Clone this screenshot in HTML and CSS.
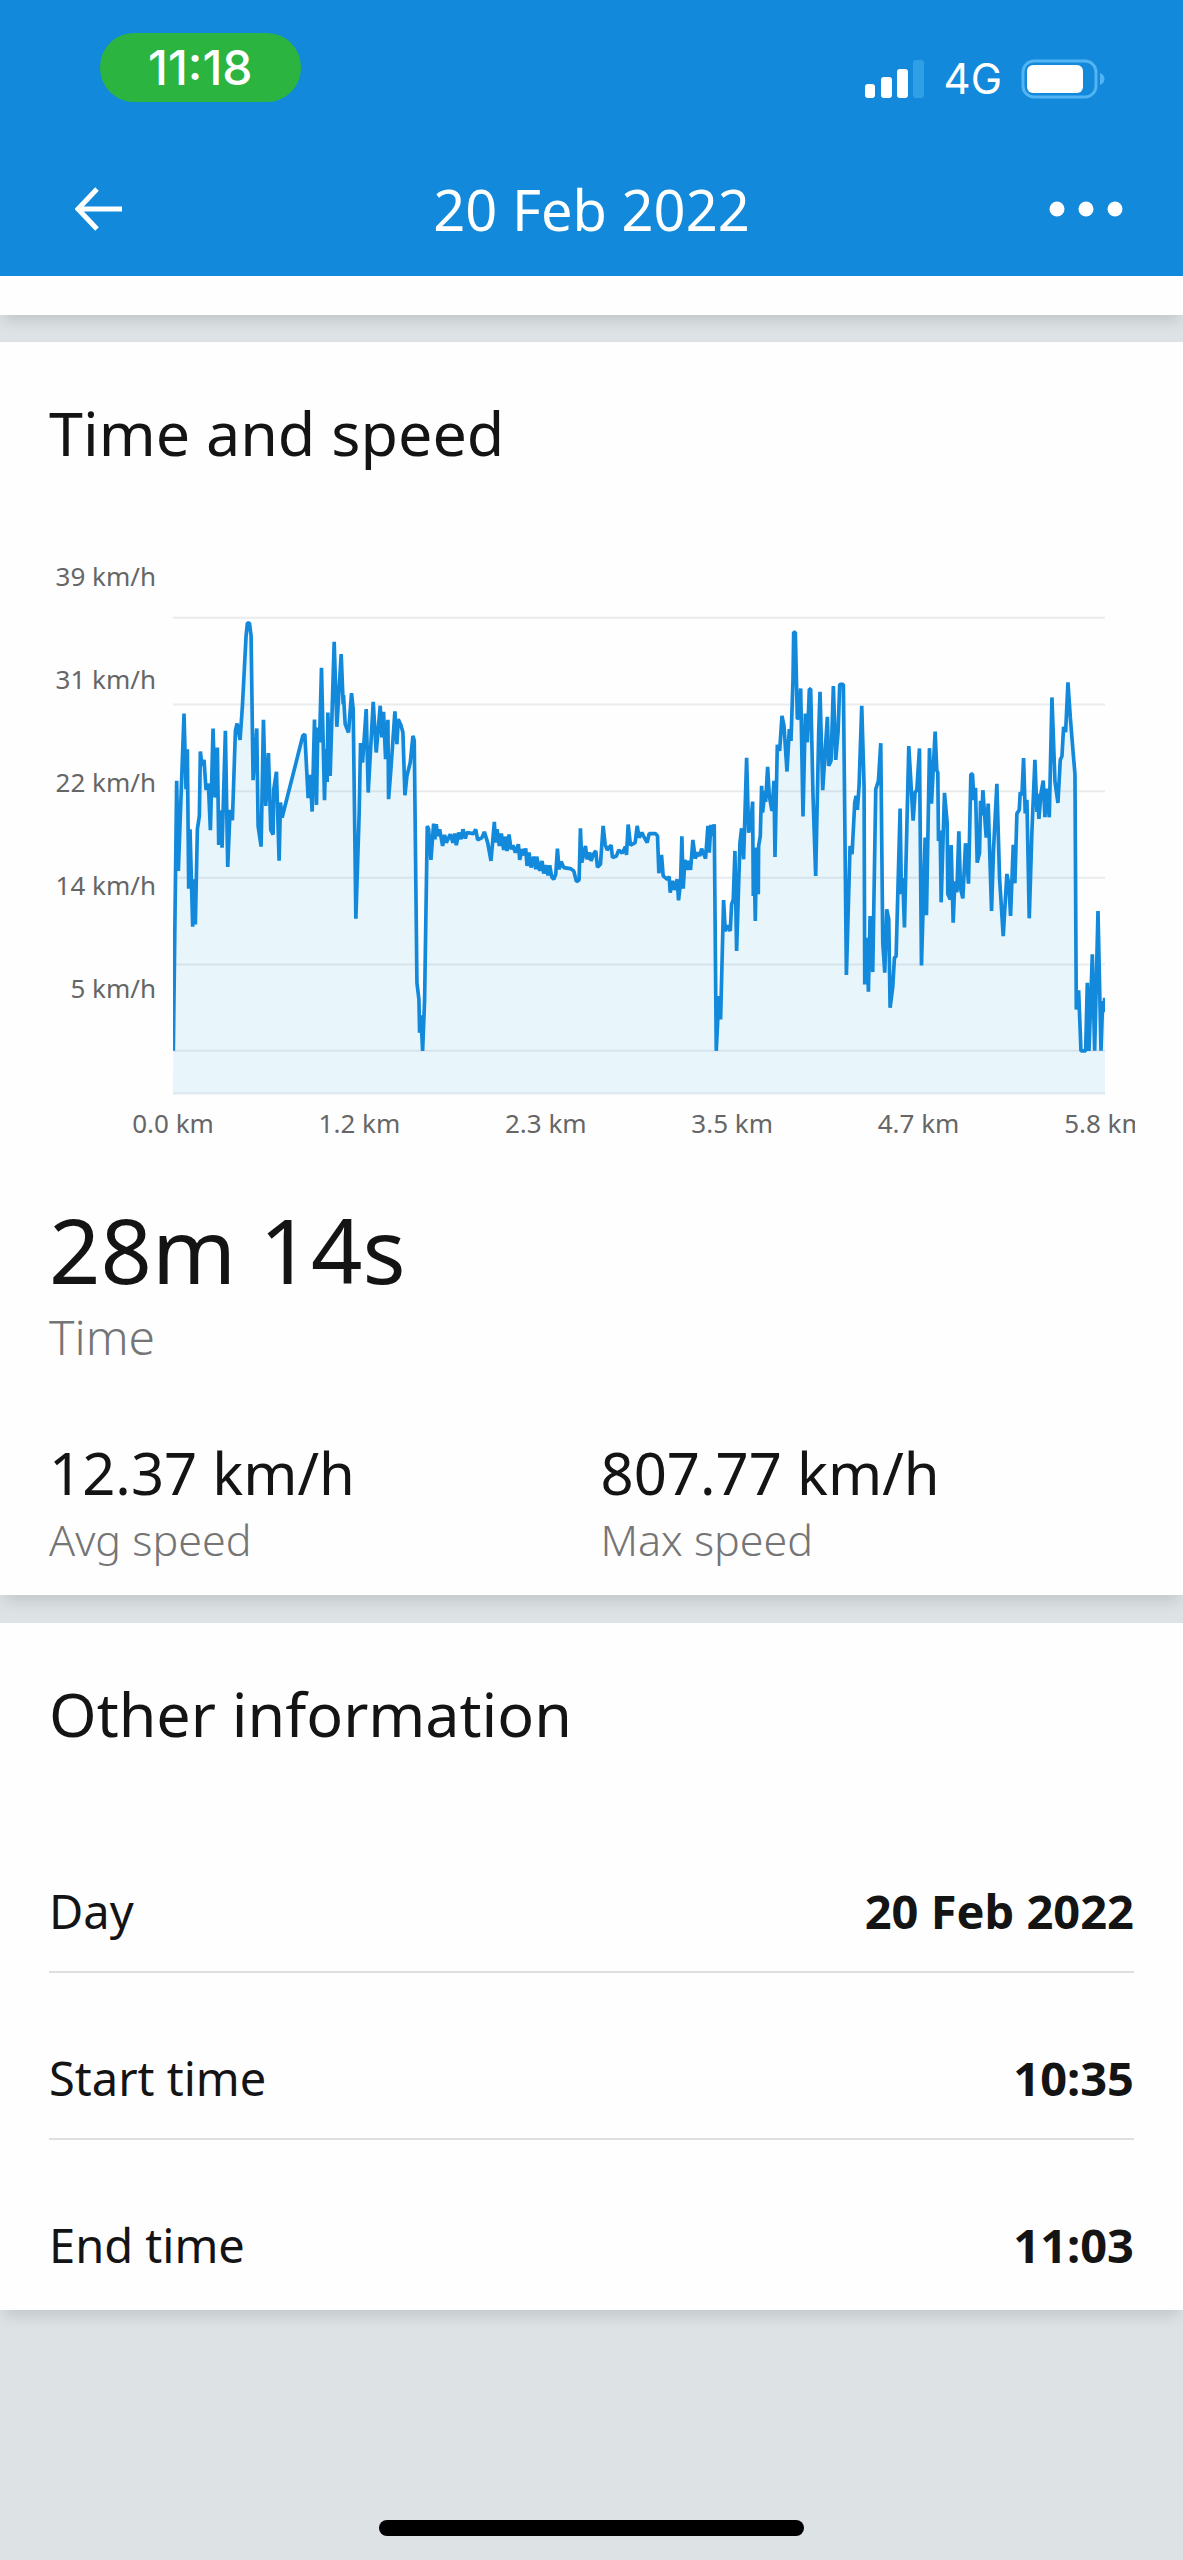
FILE: index.html
```html
<!DOCTYPE html>
<html lang="en">
<head>
  <meta charset="utf-8">
  <meta name="viewport" content="width=device-width, initial-scale=1">
  <title>20 Feb 2022</title>
  <link rel="stylesheet" href="styles.css">
</head>
<body>
  <header class="header">
    <div class="status-bar">
      <span class="clock">11:18</span>
      <div class="status-icons">
        <svg class="signal" width="60" height="39" viewBox="0 0 60 39" aria-hidden="true">
          <rect x="0" y="24" width="10" height="14" rx="3"/>
          <rect x="16" y="17" width="11" height="21" rx="3"/>
          <rect x="32" y="9" width="11" height="29" rx="3"/>
          <rect class="off" x="48" y="0" width="11" height="38" rx="3"/>
        </svg>
        <span class="network">4G</span>
        <svg class="battery" width="84" height="40" viewBox="0 0 84 40" aria-hidden="true">
          <rect class="battery-case" x="2" y="2" width="73" height="36" rx="11"/>
          <rect x="6" y="6" width="56" height="28" rx="6"/>
          <path class="battery-tip" d="M79 14c6 2 6 10 0 12z"/>
        </svg>
      </div>
    </div>
    <nav class="toolbar">
      <button class="icon-button" aria-label="Back">
        <svg width="48" height="44" viewBox="0 0 48 44">
          <path class="arrow" d="M22 2L3 22l19 20M4 22h43"/>
        </svg>
      </button>
      <h1>20 Feb 2022</h1>
      <button class="icon-button" aria-label="More">
        <svg width="74" height="16" viewBox="0 0 74 16">
          <circle cx="8" cy="8" r="7.5"/>
          <circle cx="37" cy="8" r="7.5"/>
          <circle cx="66" cy="8" r="7.5"/>
        </svg>
      </button>
    </nav>
  </header>

  <main>
    <section class="card card-end"></section>

    <section class="card">
      <h2>Time and speed</h2>

      <div class="chart">
        <div class="y-axis">
          <span>39 km/h</span>
          <span>31 km/h</span>
          <span>22 km/h</span>
          <span>14 km/h</span>
          <span>5 km/h</span>
        </div>
        <svg class="plot" viewBox="0 0 2793 1486" role="img" aria-label="Speed over distance">
          <polygon id="speed-area" class="area"/>
          <path class="grid" d="M0 56H2793M0 316H2793M0 576H2793M0 835H2793M0 1095H2793M0 1354H2793M0 1482H2793"/>
          <polyline id="speed-line" class="line"/>
        </svg>
        <div class="x-axis">
          <span>0.0 km</span>
          <span>1.2 km</span>
          <span>2.3 km</span>
          <span>3.5 km</span>
          <span>4.7 km</span>
          <span>5.8 km</span>
        </div>
      </div>

      <div class="stat stat-main">
        <strong>28m 14s</strong>
        <span>Time</span>
      </div>
      <div class="stats">
        <div class="stat">
          <strong>12.37 km/h</strong>
          <span>Avg speed</span>
        </div>
        <div class="stat">
          <strong>807.77 km/h</strong>
          <span>Max speed</span>
        </div>
      </div>
    </section>

    <section class="card card-info">
      <h2>Other information</h2>
      <dl class="info">
        <div class="info-row">
          <dt>Day</dt>
          <dd>20 Feb 2022</dd>
        </div>
        <div class="info-row">
          <dt>Start time</dt>
          <dd>10:35</dd>
        </div>
        <div class="info-row">
          <dt>End time</dt>
          <dd>11:03</dd>
        </div>
      </dl>
    </section>
  </main>

  <footer class="home">
    <div class="home-bar"></div>
  </footer>

  <script src="chart.js"></script>
</body>
</html>
```

FILE: styles.css
```css
:root {
  --blue: #1289db;
  --green: #2bb540;
  --page-bg: #dde2e5;
  --card-bg: #fefefe;
  --text: #141414;
  --muted: #757575;
  --axis: #666;
  --divider: #dddfe1;
}

* {
  box-sizing: border-box;
}

body {
  margin: 0;
  min-height: 100vh;
  display: flex;
  flex-direction: column;
  background: var(--page-bg);
  color: var(--text);
  font-family: "Noto Sans", "Open Sans", sans-serif;
}

/* Header */
.header {
  background: var(--blue);
  color: #fff;
}

.header svg {
  display: block;
  fill: #fff;
}

.status-bar {
  display: flex;
  justify-content: space-between;
  align-items: flex-start;
  padding: 33px 78px 0 100px;
  font-family: Inter, "Liberation Sans", sans-serif;
}

.clock {
  padding: 0 48px;
  border-radius: 34px;
  background: var(--green);
  font-size: 48px;
  font-weight: 500;
  line-height: 69px;
}

.status-icons {
  display: flex;
  align-items: center;
  gap: 19px;
  padding-top: 20px;
}

.signal .off {
  fill: #2f9fe6;
}

.network {
  font-size: 42px;
  font-weight: 400;
  line-height: 52px;
}

.battery .battery-case {
  fill: none;
  stroke: #52b4f2;
  stroke-width: 3;
}

.battery .battery-tip {
  fill: #52b4f2;
}

.toolbar {
  display: grid;
  grid-template-columns: 1fr auto 1fr;
  align-items: center;
  height: 134px;
  margin-top: 37px;
  padding: 0 60px;
}

.toolbar h1 {
  margin: 0;
  font-size: 56px;
  font-weight: 400;
  line-height: 72px;
}

.icon-button {
  justify-self: start;
  padding: 12px 0 12px 15px;
  border: none;
  background: transparent;
  cursor: pointer;
}

.icon-button:last-child {
  justify-self: end;
}

.icon-button .arrow {
  fill: none;
  stroke: #fff;
  stroke-width: 5;
}

/* Cards */
.card {
  margin-bottom: 28px;
  padding: 51px 49px 26px;
  background: var(--card-bg);
  box-shadow: 0 10px 14px -4px rgba(0, 0, 0, 0.12);
}

.card-end {
  padding: 39px 0 0;
  margin-bottom: 27px;
}

.card-info {
  padding-bottom: 5px;
}

.card h2 {
  margin: 0 0 52px;
  font-size: 61px;
  font-weight: 400;
  line-height: 80px;
}

/* Chart */
.chart {
  display: grid;
  grid-template-columns: 107px 1fr;
  column-gap: 17px;
  padding-right: 30px;
  margin-right: -1px;
  overflow: hidden;
  color: var(--axis);
  font-size: 26px;
}

.y-axis span {
  display: block;
  line-height: 103px;
  text-align: right;
}

.plot {
  display: block;
  width: 100%;
  margin-top: 74px;
}

.plot .area {
  fill: #e8f5fb;
}

.plot .grid {
  fill: none;
  stroke: rgba(90, 110, 125, 0.13);
  stroke-width: 6;
}

.plot .line {
  fill: none;
  stroke: var(--blue);
  stroke-width: 11;
  stroke-linejoin: bevel;
}

.x-axis {
  grid-column: 2;
  display: flex;
  justify-content: space-between;
  margin-top: 8px;
  line-height: 40px;
}

/* zero-width labels, so that each one is centred on its tick */
.x-axis span {
  display: flex;
  justify-content: center;
  width: 0;
  white-space: nowrap;
}

/* Stats */
.stats {
  display: grid;
  grid-template-columns: 1fr 1fr;
  gap: 18px;
}

.stat strong,
.stat span {
  display: block;
}

.stat strong {
  font-size: 58px;
  font-weight: 400;
  line-height: 76px;
}

.stat span {
  color: var(--muted);
  font-size: 43px;
  font-weight: 300;
  line-height: 58px;
}

.stat-main {
  margin: 52px 0 64px;
}

.stat-main strong {
  font-size: 90px;
  line-height: 108px;
}

.stat-main span {
  font-size: 48px;
  line-height: 68px;
}

/* Other information */
.info {
  margin: 0;
}

.info-row {
  display: flex;
  justify-content: space-between;
  padding: 73px 0 28px;
  border-bottom: 2px solid var(--divider);
  font-size: 47px;
  line-height: 64px;
}

.info-row:last-child {
  border-bottom: none;
}

.info-row dd {
  margin: 0;
  font-weight: 700;
}

/* Home indicator */
.home {
  margin-top: auto;
  padding-bottom: 24px;
}

.home-bar {
  width: 36%;
  height: 16px;
  margin: 0 auto;
  border-radius: 8px;
  background: #000;
}
```

FILE: chart.js
```js
// Speed samples, one part per stretch of the ride. Each part starts at its own x.
const parts = [
  { x: -39, points: '40,1354 50,545 55,815 72,343 78,570 82,450 86,868 90,690 98,982 102,840 106,975 112,690 118,650 121,457 126,500 132,482 138,572 145,553 151,693 159,388 165,595 172,445 176,737 181,633 186,745 196,395 203,803 210,632 217,663 226,395 231,373 240,422 247,320 258,110 262,72 268,72 273,110 279,543 290,388 294,680 303,742 310,362 317,620 325,462 332,692 339,706 341,570 349,518 357,784 361,610 366,655 428,410 434,405 444,597 450,527 456,637 463,361 469,617 473,385 478,430 484,206 493,603 497,450 501,548 503,340 510,530 522,128 530,383 543,165 549,315 550,288 555,375 565,400 574,282 579,330 587,958 597,640 601,432 607,490 618,330 624,580 639,308 648,460 660,320 665,415 670,338 676,480 683,362 685,600 692,510 704,337 710,435 714,360 722,378 728,400 734,588 740,530 750,490 758,410 762,425 770,1150 776,1200 778,1300 782,1248 787,1354 793,1200 801,680 805,690' },
  { x: 681, points: '92,782 100,673 104,720 108,675 112,710 118,690 127,740 133,707 138,730 150,705 158,730 163,703 168,738 175,700 182,720 188,690 195,718 200,700 220,703 226,690 232,722 245,715 252,698 262,730 272,785 282,668 285,730 290,690 297,740 303,703 310,752 314,712 320,755 326,706 332,750 338,738 345,760 354,735 358,782 365,750 372,768 376,747 380,800 386,760 392,805 400,772 406,810 409,772 418,815 425,785 430,823 436,798 443,828 448,798 454,833 460,840 466,825 471,748 476,810 482,787 490,805 510,808 520,815 528,847 536,842 540,687 544,790 555,740 560,780 568,760 572,785 580,763 586,755 591,804 600,795 608,680 614,735 620,752 632,738 636,775 648,770 655,752 665,762 675,742 678,767 683,676 690,738 704,730 710,680 716,715 724,700 730,712 740,730 746,703 765,703 771,710 775,822 783,767 788,830 800,840 806,832 809,880 816,845 822,872 830,840' },
  { x: 1461, points: '54,903 60,850 64,711 68,868 73,782 80,812 85,785 90,812 97,722 104,778 112,760 118,770 123,748 135,778 142,680 146,760 151,677 156,710 161,675 167,1354 175,1190 180,1260 189,902 194,995 200,978 209,995 213,915 218,900 223,755 228,1055 238,730 243,687 249,780 258,476 264,700 270,680 276,607 278,890 280,750 284,965 288,745 293,885 294,740 299,710 303,560 306,640 313,575 315,608 321,503 326,590 334,635 340,545 343,773 350,437 357,455 364,350 370,380 379,517 386,390 391,425 397,240 399,100 404,100 410,360 414,355 420,268 427,652 434,343 440,430 446,270 450,270 457,590 465,830 474,400 478,278 486,573 492,480 500,353 504,500 511,485 518,261 525,482 532,400 537,256 548,256 557,1127 568,740 574,765 582,610 586,590 590,632 595,560 603,320 610,560 612,1155 618,1015 623,1177 628,950 636,1118 645,570 653,545 660,432 666,1030 672,1120 678,930 684,960' },
  { x: 2121, points: '28,1225 36,1162 41,1075 46,1071 58,628 62,884 66,836 71,984 84,441 97,664 103,579 108,573 116,448 122,1098 133,715 137,948 146,447 152,613 163,397 168,514 171,520 173,725 178,694 181,909 191,581 199,670 201,884 208,900 211,737 217,970 222,846 228,879 234,696 239,868 246,897 254,732 263,853 270,525 275,525 279,602 284,566 289,790 296,761 299,605 303,648 306,573 316,715 322,613 332,935 338,750 348,554 356,836 367,1010 378,824 384,857 389,950 397,737 402,852 408,643 415,632 418,579 423,589 428,477 433,643 438,602 445,957 453,696 462,482 468,638 470,584 474,659 480,584 487,544 492,654 497,568 505,654 513,295 522,546 531,611 538,482 543,471 548,383 554,399 561,250 568,354 577,466 582,525 586,1230 593,1173 600,1354 614,1354 619,1150 624,1354 634,1065 641,1354 651,935 660,1354 665,1205 668,1238 671,1195' }
];

const points = parts.flatMap(part =>
  part.points.split(' ').map(pair => {
    const [x, y] = pair.split(',').map(Number);
    return `${x + part.x},${y}`;
  })
).join(' ');

document.getElementById('speed-line').setAttribute('points', points);
document.getElementById('speed-area').setAttribute('points', `0,1482 ${points} 2793,1195 2793,1482`);
```
